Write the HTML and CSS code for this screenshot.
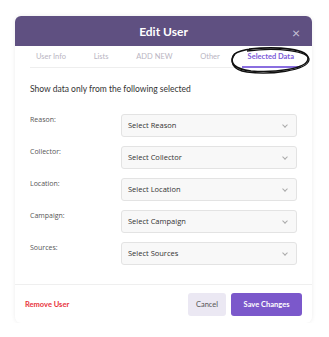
FILE: index.html
```html
<!DOCTYPE html>
<html lang="en">
<head>
    <meta charset="UTF-8">
    <meta name="viewport" content="width=device-width, initial-scale=1.0">
    <title>Edit User</title>
    <link rel="stylesheet" href="styles.css">
</head>
<body>
    <div class="modal">
        <div class="modal-header">
            <h2 class="modal-title">Edit User</h2>
            <span class="close">&times;</span>
        </div>

        <div class="tabs">
            <span class="tab">User Info</span>
            <span class="tab">Lists</span>
            <span class="tab">ADD NEW</span>
            <span class="tab">Other</span>
            <span class="tab active">Selected Data</span>
        </div>

        <!-- hand drawn circle round the active tab -->
        <svg class="scribble" width="84" height="32" viewBox="0 0 84 32">
            <path d="M20 4 C 50 1, 80 4, 79 14 C 78 24, 45 28, 22 26 C 5 24, 1 18, 4 11 C 7 5, 25 3, 36 3" fill="none" stroke="#111" stroke-width="1.6"/>
            <path d="M18 6 C 48 2, 81 6, 80 15 C 78 26, 40 30, 18 27 C 3 25, 0 16, 6 9" fill="none" stroke="#111" stroke-width="1.3"/>
        </svg>

        <div class="modal-body">
            <p class="intro">Show data only from the following selected</p>

            <div class="form-row">
                <label>Reason:</label>
                <div class="select">Select Reason <span class="chevron"></span></div>
            </div>
            <div class="form-row">
                <label>Collector:</label>
                <div class="select">Select Collector <span class="chevron"></span></div>
            </div>
            <div class="form-row">
                <label>Location:</label>
                <div class="select">Select Location <span class="chevron"></span></div>
            </div>
            <div class="form-row">
                <label>Campaign:</label>
                <div class="select">Select Campaign <span class="chevron"></span></div>
            </div>
            <div class="form-row">
                <label>Sources:</label>
                <div class="select">Select Sources <span class="chevron"></span></div>
            </div>
        </div>

        <div class="modal-footer">
            <span class="remove">Remove User</span>
            <div class="actions">
                <button class="cancel">Cancel</button>
                <button class="save">Save Changes</button>
            </div>
        </div>
    </div>
</body>
</html>
```

FILE: styles.css
```css
body {
    margin: 0;
    background: #fff;
    font-family: "Lato", "Noto Sans", sans-serif;
}

.modal {
    position: relative;
    margin: 16px 0 0 15px;
    width: 297px;
    background: #fff;
    border-radius: 6px;
    box-shadow: 0 0 4px rgba(0, 0, 0, 0.08);
}

.modal-header {
    position: relative;
    height: 30px;
    background: #5f5081;
    border-radius: 6px 6px 0 0;
    display: flex;
    justify-content: center;
    align-items: center;
}

.modal-title {
    margin: 0;
    color: #fff;
    font-size: 12px;
    font-weight: bold;
}

.close {
    position: absolute;
    right: 12px;
    top: 10px;
    color: #c9c3d8;
    font-size: 14px;
    line-height: 14px;
}

.tabs {
    display: flex;
    justify-content: space-between;
    margin: 0 12px 0 15px;
    border-bottom: 1px solid #eeeeee;
}

.tab {
    padding: 6px 6px 5px;
    font-size: 7.5px;
    color: #b9b5c2;
    border-bottom: 2px solid transparent;
    margin-bottom: -1px;
}

.tab.active {
    color: #7b5ad8;
    font-weight: bold;
    border-bottom-color: #8a6ee0;
}

.scribble {
    position: absolute;
    left: 214px;
    top: 29px;
}

.modal-body {
    padding: 16px 15px 19px;
}

.intro {
    margin: 0 0 20px;
    font-size: 8.5px;
    color: #333;
}

.form-row {
    display: flex;
    align-items: flex-start;
    margin-bottom: 9px;
}

.form-row:last-child {
    margin-bottom: 0;
}

.form-row label {
    width: 91px;
    padding-top: 1px;
    font-family: "Open Sans", sans-serif;
    font-size: 7px;
    color: #555;
}

.select {
    position: relative;
    flex: 1;
    height: 21px;
    line-height: 21px;
    padding-left: 6px;
    background: #f8f8f8;
    border: 1px solid #e3e3e3;
    border-radius: 3px;
    font-family: "Open Sans", sans-serif;
    font-size: 7.5px;
    font-weight: 500;
    color: #333;
}

.chevron {
    position: absolute;
    right: 9px;
    top: 8px;
    width: 3px;
    height: 3px;
    border-right: 1px solid #aaa;
    border-bottom: 1px solid #aaa;
    transform: rotate(45deg);
}

.modal-footer {
    display: flex;
    justify-content: space-between;
    align-items: center;
    padding: 8px 10px 7px;
    border-top: 1px solid #efefef;
}

.remove {
    color: #e8333b;
    font-size: 7.5px;
    font-weight: bold;
}

.actions {
    display: flex;
    gap: 5px;
}

button {
    height: 23px;
    border: none;
    border-radius: 3px;
    font-family: "Lato", sans-serif;
    font-size: 7.5px;
    cursor: pointer;
}

.cancel {
    width: 38px;
    background: #ebe8f3;
    color: #555;
}

.save {
    width: 71px;
    background: #7b58cb;
    color: #fff;
    font-weight: bold;
}
```
